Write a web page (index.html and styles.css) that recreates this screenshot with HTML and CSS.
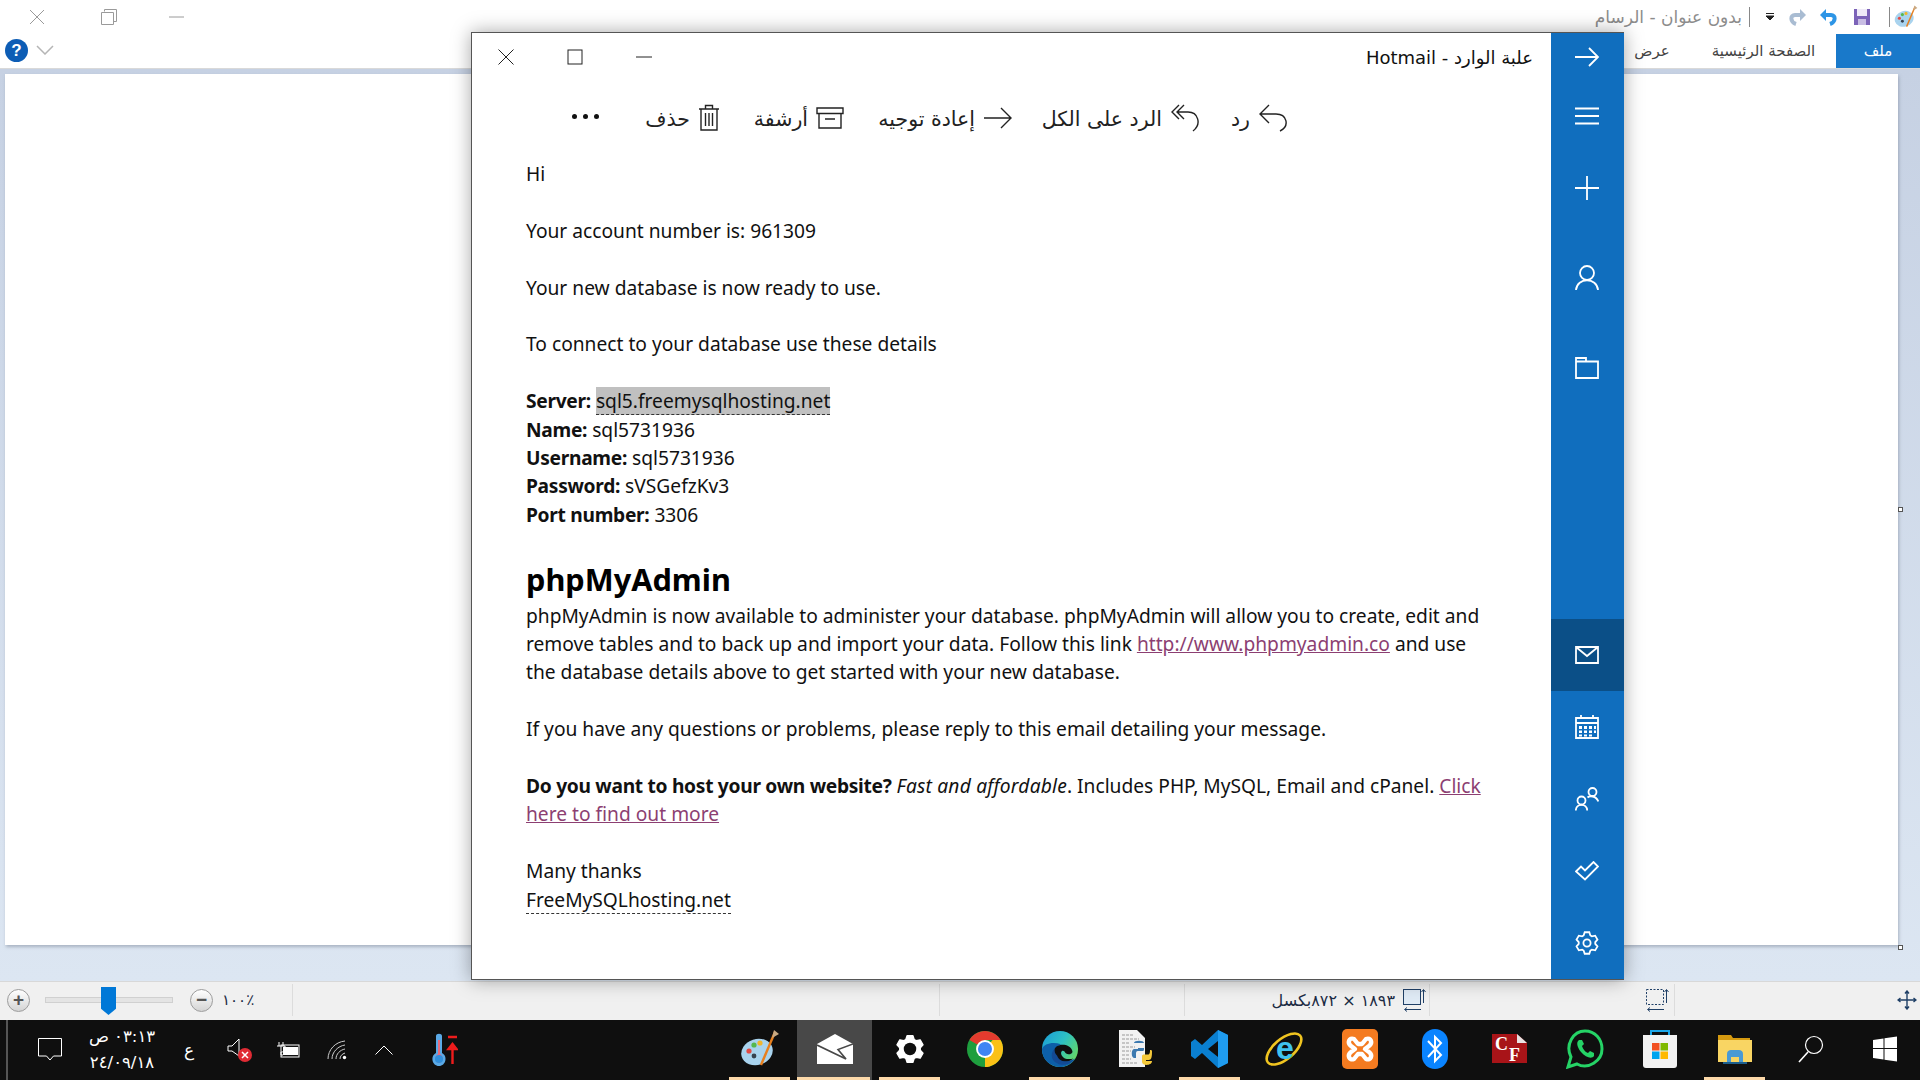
FILE: index.html
```html
<!DOCTYPE html>
<html lang="ar">
<head>
    <meta charset="UTF-8">
    <title>علبة الوارد - Hotmail</title>
    <link rel="stylesheet" href="styles.css">
</head>
<body>
    <div class="paint">
        <div class="paint-title">
            <div class="win-controls">
                <svg class="ctl" width="18" height="18" viewBox="0 0 18 18"><path d="M2 2 L16 16 M16 2 L2 16"/></svg>
                <svg class="ctl ctl-mid" width="18" height="18" viewBox="0 0 18 18"><path d="M4.5 3.5 V1.5 H16.5 V13.5 H13.5 M1.5 4.5 H13.5 V16.5 H1.5 Z"/></svg>
                <svg class="ctl" width="18" height="18" viewBox="0 0 18 18"><path d="M2 9 H17"/></svg>
            </div>
            <div class="paint-caption">
                <span class="caption-text" dir="rtl">بدون عنوان - الرسام</span>
                <span class="caption-sep sep-a"></span>
                <svg class="dropdown" width="10" height="8" viewBox="0 0 10 8"><path d="M1 0.5 H9 M1 3 H9 L5 7 Z" stroke="#222" fill="#222"/></svg>
                <svg class="qat-redo" width="20" height="20" viewBox="0 0 20 20"><path d="M14 8 H8 C3 8 3 15 9 17" fill="none" stroke="#a9bcd2" stroke-width="4"/><path d="M13 2 V14 L19 8 Z" fill="#a9bcd2"/></svg>
                <svg class="qat-undo" width="20" height="20" viewBox="0 0 20 20"><path d="M6 8 H12 C17 8 17 15 11 17" fill="none" stroke="#2d95e6" stroke-width="4"/><path d="M7 2 V14 L1 8 Z" fill="#2d95e6"/></svg>
                <svg class="qat-save" width="18" height="18" viewBox="0 0 18 18"><rect x="1" y="1" width="16" height="16" fill="#7c63b8"/><rect x="4" y="1" width="10" height="7" fill="#efeaf7"/><rect x="5" y="11" width="8" height="6" fill="#c8bde3"/></svg>
                <span class="caption-sep"></span>
                <svg class="qat-app" width="24" height="24" viewBox="0 0 40 40"><use href="#palette"/></svg>
            </div>
        </div>
        <div class="ribbon">
            <div class="ribbon-left">
                <span class="help">?</span>
                <svg class="chev" width="18" height="10" viewBox="0 0 18 10"><path d="M1 1 L9 9 L17 1"/></svg>
            </div>
            <div class="tabs" dir="rtl">
                <span class="tab tab-file">ملف</span>
                <span class="tab tab-home">الصفحة الرئيسية</span>
                <span class="tab tab-view">عرض</span>
            </div>
        </div>
        <div class="canvas">
            <div class="sheet">
                <span class="handle handle-mid"></span>
                <span class="handle handle-end"></span>
            </div>
        </div>
        <div class="status">
            <div class="stat stat-zoom">
                <span class="round-btn">+</span>
                <div class="slider"><span class="thumb"></span></div>
                <span class="round-btn">&minus;</span>
                <span class="zoom-val">١٠٠٪</span>
            </div>
            <div class="stat stat-wide"></div>
            <div class="stat stat-mid"></div>
            <div class="stat stat-mid stat-size">
                <span dir="rtl">١٨٩٣ × ٨٧٢بكسل</span>
                <svg width="24" height="24" viewBox="0 0 24 24" class="size-ico"><rect x="1.5" y="1.5" width="17" height="15" fill="#dfeaf5" stroke="#1f3f66"/><path d="M21.5 15 V2 M19.5 4 L21.5 1.5 L23.5 4 M19 21.5 H3 M5 19.5 L2.5 21.5 L5 23.5" stroke="#1f3f66" fill="none"/></svg>
            </div>
            <div class="stat stat-mid stat-select">
                <svg width="24" height="24" viewBox="0 0 24 24" class="size-ico"><rect x="1.5" y="1.5" width="17" height="15" fill="none" stroke="#1f3f66" stroke-dasharray="2 1.5"/><path d="M21.5 15 V2 M19.5 4 L21.5 1.5 L23.5 4 M19 21.5 H3 M5 19.5 L2.5 21.5 L5 23.5" stroke="#1f3f66" fill="none"/></svg>
            </div>
            <div class="stat stat-last">
                <svg width="20" height="20" viewBox="0 0 20 20" class="size-ico"><path d="M10 1 V19 M1 10 H19 M8 3.5 L10 1 L12 3.5 M8 16.5 L10 19 L12 16.5 M3.5 8 L1 10 L3.5 12 M16.5 8 L19 10 L16.5 12" stroke="#1f3f66" stroke-width="1.4" fill="none"/></svg>
            </div>
        </div>
    </div>

    <div class="mail-window">
        <div class="mail-main">
            <div class="mail-head">
                <div class="mail-controls">
                    <svg class="mctl" width="16" height="16" viewBox="0 0 16 16"><path d="M0.5 0.5 L15.5 15.5 M15.5 0.5 L0.5 15.5"/></svg>
                    <svg class="mctl" width="16" height="16" viewBox="0 0 16 16"><rect x="1" y="1" width="14" height="14"/></svg>
                    <svg class="mctl" width="16" height="16" viewBox="0 0 16 16"><path d="M0 8 H16"/></svg>
                </div>
                <span class="mail-title" dir="rtl">علبة الوارد - Hotmail</span>
            </div>
            <div class="toolbar">
                <div class="dots"><i></i><i></i><i></i></div>
                <div class="action act-delete">
                    <span dir="rtl">حذف</span>
                    <svg class="tico" width="22" height="28" viewBox="0 0 22 28"><path d="M1 5 H21 M3 5 V26 H19 V5 M7.5 5 V1.5 H14.5 V5 M7.5 9 V22 M11 9 V22 M14.5 9 V22"/></svg>
                </div>
                <div class="action act-archive">
                    <span dir="rtl">أرشفة</span>
                    <svg class="tico" width="28" height="24" viewBox="0 0 28 24"><path d="M1 2 H27 V7.5 H1 Z M3 7.5 V22 H25 V7.5 M9 13 H19"/></svg>
                </div>
                <div class="action act-forward">
                    <span dir="rtl">إعادة توجيه</span>
                    <svg class="tico" width="30" height="24" viewBox="0 0 30 24"><path d="M1 12 H28 M18 2 L28 12 L18 22"/></svg>
                </div>
                <div class="action act-all">
                    <span dir="rtl">الرد على الكل</span>
                    <svg class="tico" width="30" height="28" viewBox="0 0 30 28"><path d="M9 1 L2 8 L9 15 M14 1 L7 8 L14 15 M7 8 H18 C28 8 32 20 23 27"/></svg>
                </div>
                <div class="action act-reply">
                    <span dir="rtl">رد</span>
                    <svg class="tico" width="30" height="28" viewBox="0 0 30 28"><path d="M11 1 L2 10 L11 19 M2 10 H18 C29 10 32 22 22 27"/></svg>
                </div>
            </div>
            <div class="mail-body">
                <p>Hi</p>
                <p>Your account number is: 961309</p>
                <p>Your new database is now ready to use.</p>
                <p>To connect to your database use these details</p>
                <p>
                    <b>Server:</b> <span class="detected">sql5.freemysqlhosting.net</span><br>
                    <b>Name:</b> sql5731936<br>
                    <b>Username:</b> sql5731936<br>
                    <b>Password:</b> sVSGefzKv3<br>
                    <b>Port number:</b> 3306
                </p>
                <h2>phpMyAdmin</h2>
                <p>phpMyAdmin is now available to administer your database. phpMyAdmin will allow you to create, edit and<br>
                remove tables and to back up and import your data. Follow this link <a href="#">http://www.phpmyadmin.co</a> and use<br>
                the database details above to get started with your new database.</p>
                <p>If you have any questions or problems, please reply to this email detailing your message.</p>
                <p><b>Do you want to host your own website?</b> <i>Fast and affordable</i>. Includes PHP, MySQL, Email and cPanel. <a href="#">Click<br>here to find out more</a></p>
                <p>Many thanks<br><span class="dashed">FreeMySQLhosting.net</span></p>
            </div>
        </div>
        <div class="rail">
            <div class="rail-item rail-first"><svg width="26" height="24" viewBox="0 0 26 24"><path d="M1 12 H24 M15 3 L24 12 L15 21"/></svg></div>
            <div class="rail-item"><svg width="24" height="18" viewBox="0 0 24 18"><path d="M0 1.5 H24 M0 9 H24 M0 16.5 H24"/></svg></div>
            <div class="rail-item"><svg width="24" height="24" viewBox="0 0 24 24"><path d="M0 12 H24 M12 0 V24"/></svg></div>
            <div class="rail-item rail-gap"><svg width="24" height="26" viewBox="0 0 24 26"><circle cx="12" cy="8" r="7"/><path d="M1 25 C2 12 22 12 23 25"/></svg></div>
            <div class="rail-item rail-gap"><svg width="24" height="22" viewBox="0 0 24 22"><path d="M1 4.5 H23 V21 H1 Z M1 4.5 V1 H11 V4.5"/></svg></div>
            <div class="rail-bottom">
                <div class="rail-item rail-on"><svg width="24" height="18" viewBox="0 0 24 18"><path d="M1 1 H23 V17 H1 Z M1 1 L12 10 L23 1"/></svg></div>
                <div class="rail-item"><svg width="24" height="24" viewBox="0 0 24 24"><path d="M1 3 H23 V23 H1 Z M1 8 H23 M6 0 V4 M18 0 V4"/><path class="fill" d="M4 11 H7 V14 H4 Z M9 11 H12 V14 H9 Z M14 11 H17 V14 H14 Z M19 11 H21 V14 H19 Z M4 15.5 H7 V18 H4 Z M9 15.5 H12 V18 H9 Z M14 15.5 H17 V18 H14 Z M19 15.5 H21 V18 H19 Z M4 19.5 H7 V21.5 H4 Z M9 19.5 H12 V21.5 H9 Z M14 19.5 H17 V21.5 H14 Z"/></svg></div>
                <div class="rail-item"><svg width="24" height="24" viewBox="0 0 24 24"><circle cx="6.5" cy="13.5" r="4"/><path d="M0.8 23.5 C1 16 12 16 12.2 23.5"/><circle cx="17.5" cy="5" r="4"/><path d="M12.5 10.5 C14 9 21 8 23.3 14.5"/></svg></div>
                <div class="rail-item"><svg width="24" height="20" viewBox="0 0 24 20"><path d="M1 10.5 L6 5.5 L10 9.5 L18.5 1 L23 5.5 L10 18.5 Z"/></svg></div>
                <div class="rail-item"><svg width="24" height="24" viewBox="0 0 24 24"><polygon points="9.71,1.24 14.29,1.24 15.38,4.42 16.88,5.28 20.17,4.64 22.46,8.6 20.26,11.13 20.26,12.87 22.46,15.4 20.17,19.36 16.88,18.72 15.38,19.58 14.29,22.76 9.71,22.76 8.62,19.58 7.12,18.72 3.83,19.36 1.54,15.4 3.74,12.87 3.74,11.13 1.54,8.6 3.83,4.64 7.12,5.28 8.62,4.42"/><circle cx="12" cy="12" r="3.6"/></svg></div>
            </div>
        </div>
    </div>

    <div class="taskbar">
        <div class="tray">
            <span class="tray-line"></span>
            <svg width="24" height="24" viewBox="0 0 24 24"><path d="M0.5 0.5 H23.5 V18 H15.5 L12 22 L8.5 18 H0.5 Z" fill="none" stroke="#fff"/></svg>
            <div class="clock" dir="rtl"><span>٠٣:١٣ ص</span><span>٢٤/٠٩/١٨</span></div>
            <span class="lang">ع</span>
            <svg width="26" height="24" viewBox="0 0 26 24"><path d="M1 8 H5 L12 1 V18 L5 13 H1 Z" fill="none" stroke="#fff"/><circle cx="18" cy="17" r="7" fill="#e02b34"/><path d="M15 14 L21 20 M21 14 L15 20" stroke="#fff" stroke-width="1.5"/></svg>
            <svg width="24" height="18" viewBox="0 0 24 18"><path d="M3 1 V5 M7 1 V5 M1 5 H9 V8 C9 11 6 11 5 11 V14 H7" fill="none" stroke="#fff"/><rect x="5" y="4" width="18" height="12" fill="none" stroke="#fff"/><rect x="7" y="6" width="15" height="8" fill="#fff"/></svg>
            <svg width="20" height="20" viewBox="0 0 20 20"><g fill="none" stroke="#ccc"><path d="M1 19 C1 10 8 2 18 1"/><path d="M5 19 C5 12 11 6 18 5"/><path d="M9 19 C9 14 13 10 18 9"/><path d="M13 19 C13 16 15 14 18 13"/></g><circle cx="17.5" cy="17.5" r="1.7" fill="#fff"/></svg>
            <svg width="18" height="10" viewBox="0 0 18 10"><path d="M0.5 9.5 L9 1 L17.5 9.5" fill="none" stroke="#fff"/></svg>
            <svg width="28" height="34" viewBox="0 0 28 34"><path d="M6 3 C6 0 12 0 12 3 V20 C18 23 16 33 9 33 C2 33 0 23 6 20 Z" fill="#5aa9e6"/><path d="M8 7 H10 V21 C14 23 13 30 9 30 C5 30 4 23 8 21 Z" fill="#e86a7a"/><circle cx="9" cy="26" r="4" fill="#2f8fdc"/><path d="M18 4 H27 M22.5 31 V12 M18.5 16 L22.5 11 L26.5 16 Z" stroke="#ee1c1c" stroke-width="2.4" fill="#ee1c1c"/></svg>
        </div>
        <div class="task run">
            <svg width="40" height="40" viewBox="0 0 40 40"><symbol id="palette" viewBox="0 0 40 40"><ellipse cx="17" cy="23" rx="16" ry="13" fill="#a9d3ee" transform="rotate(-18 17 23)"/><circle cx="9" cy="22" r="2.6" fill="#e34a43"/><circle cx="14" cy="16" r="2.6" fill="#55b84e"/><circle cx="20" cy="14" r="2.6" fill="#f0b52e"/><circle cx="14" cy="27" r="2.4" fill="#38424f"/><path d="M35 3 L21 36" stroke="#e77f1e" stroke-width="2.4"/><path d="M32 9 L34 1 L39 5 Z" fill="#c9a982"/></symbol><use href="#palette"/></svg>
        </div>
        <div class="task run active">
            <svg width="36" height="30" viewBox="0 0 36 30"><path d="M0 10 L18 0 L36 10 V30 H0 Z" fill="#fff"/><path d="M0 11 L29 25 L21 15.5 L36 10" fill="none" stroke="#484848" stroke-width="1.6"/></svg>
        </div>
        <div class="task run">
            <svg width="30" height="30" viewBox="0 0 24 24"><polygon points="9.71,1.24 14.29,1.24 15.38,4.42 16.88,5.28 20.17,4.64 22.46,8.6 20.26,11.13 20.26,12.87 22.46,15.4 20.17,19.36 16.88,18.72 15.38,19.58 14.29,22.76 9.71,22.76 8.62,19.58 7.12,18.72 3.83,19.36 1.54,15.4 3.74,12.87 3.74,11.13 1.54,8.6 3.83,4.64 7.12,5.28 8.62,4.42" fill="#fff" stroke="#fff" stroke-linejoin="round"/><circle cx="12" cy="12" r="5" fill="#0f0f0f"/></svg>
        </div>
        <div class="task">
            <svg width="38" height="38" viewBox="0 0 40 40"><circle cx="20" cy="20" r="19" fill="#1e9e3e"/><path d="M3.6 10.5 A19 19 0 0 1 36.4 10.5 L20 10.5 L11.8 15.3 Z" fill="#e33b2e"/><path d="M36.4 10.5 A19 19 0 0 1 20 39 L20 20 L28 10.5 Z" fill="#fbc116"/><circle cx="20" cy="20" r="9.4" fill="#fff"/><circle cx="20" cy="20" r="7.4" fill="#3f85f4"/></svg>
        </div>
        <div class="task run">
            <svg width="38" height="38" viewBox="0 0 40 40"><defs><linearGradient id="edgeTop" x1="0" y1="0" x2="1" y2="0.6"><stop offset="0" stop-color="#1a9ad8"/><stop offset="0.55" stop-color="#2dc1c4"/><stop offset="1" stop-color="#62d66a"/></linearGradient></defs><circle cx="20" cy="20" r="19" fill="url(#edgeTop)"/><path d="M1 20 C1 32 11 39 20 39 C26 39 32 36 36 30 C30 33 21 34 17 28 C14 23 16 17 21 15 C13 12 3 14 1 20 Z" fill="#0d5fa8"/><path d="M14 22 C14 14 30 13 33 22 C34 26 26 27 25 23 C22 20 20 24 22 27 C24 31 30 31 34 30 C28 36 14 34 14 22 Z" fill="#0f0f0f"/><path d="M17 27 C19 33 27 35 35 31 C30 37 22 38 17 35 C10 32 10 24 14 20 C14 23 15 25 17 27 Z" fill="#134a94"/></svg>
        </div>
        <div class="task">
            <svg width="36" height="40" viewBox="0 0 36 40"><path d="M2 1 H20 L28 9 V38 H2 Z" fill="#f2f2f2"/><path d="M5 6 H17 M5 10 H22 M5 14 H12 M5 18 H18 M5 22 H14 M5 26 H12 M5 30 H14 M5 34 H20" stroke="#9a9a9a" stroke-width="1.2" stroke-dasharray="3 1"/><path d="M17 14 C17 11 27 11 27 14 V19 H21 V20.5 H27 V20 H17 C14 20 14 29 17 29 H19 V24 C19 22 21 22 21 22 H26 C27 22 27 20 27 20 V14 Z" fill="#3d7ab0"/><path d="M35 23 C35 32 33 31 29 31 V32 H35 C35 37 25 37 25 33 V27 C25 26 26 25.5 27 25.5 H31 C33 25.5 33 23 33 21 H34 C35 21 35 22 35 23 Z" fill="#f5c93a"/></svg>
        </div>
        <div class="task run">
            <svg width="38" height="40" viewBox="0 0 38 40"><path d="M27 1 L37 6 V34 L27 39 L11 24 L4 30 L0 27 V13 L4 10 L11 16 Z M27 12 L17 20 L27 28 Z" fill="#0a7fd0" fill-rule="evenodd"/><path d="M27 1 L37 6 V34 L27 39 Z M27 12 V28 Z" fill="#1f9cf0"/></svg>
        </div>
        <div class="task">
            <svg width="40" height="40" viewBox="0 0 40 40"><ellipse cx="19" cy="20" rx="21" ry="10" transform="rotate(-40 19 20)" fill="none" stroke="#f0c420" stroke-width="2.6"/><text x="20" y="30" class="ie-e">e</text></svg>
        </div>
        <div class="task">
            <svg width="36" height="40" viewBox="0 0 36 40"><rect width="36" height="40" rx="5" fill="#f47b20"/><path d="M12 10 C7 8 5 14 9 17 L13 20 L9 23 C5 26 7 32 12 30 L16 25 H20 L24 30 C29 32 31 26 27 23 L23 20 L27 17 C31 14 29 8 24 10 L20 15 H16 Z" fill="none" stroke="#fff" stroke-width="4.4" stroke-linejoin="round"/></svg>
        </div>
        <div class="task">
            <svg width="26" height="40" viewBox="0 0 26 40"><rect width="26" height="40" rx="13" fill="#0a84ff"/><path d="M6 12 L19 26 L13 32 V8 L19 14 L6 28" fill="none" stroke="#fff" stroke-width="2"/></svg>
        </div>
        <div class="task">
            <svg width="36" height="32" viewBox="0 0 36 32"><path d="M0 1 H25 L35 10 V30 H0 Z" fill="#a81418"/><path d="M25 1 L35 10 H25 Z" fill="#e8e2e2"/><text x="3" y="17" class="cf">C</text><text x="17" y="28" class="cf">F</text></svg>
        </div>
        <div class="task">
            <svg width="38" height="40" viewBox="0 0 38 40"><path d="M2 38 L5 28 C-1 16 7 2 19 2 C29 2 36 10 36 20 C36 32 22 41 11 35 Z" fill="none" stroke="#25d366" stroke-width="3"/><path d="M13 11 C10 13 11 18 15 23 C20 29 26 30 28 27 L28 24 L24 22 L22 24 C19 23 17 20 16 17 L18 15 L16 11 Z" fill="#25d366"/></svg>
        </div>
        <div class="task">
            <svg width="36" height="40" viewBox="0 0 36 40"><path d="M9 6 V2 H27 V6" fill="none" stroke="#1ba6e8" stroke-width="2"/><path d="M1 6 H35 V36 C35 38 34 39 32 39 H4 C2 39 1 38 1 36 Z" fill="#f2f2f2"/><rect x="10" y="14" width="7.5" height="7.5" fill="#f25022"/><rect x="18.5" y="14" width="7.5" height="7.5" fill="#7fba00"/><rect x="10" y="22.5" width="7.5" height="7.5" fill="#00a4ef"/><rect x="18.5" y="22.5" width="7.5" height="7.5" fill="#ffb900"/></svg>
        </div>
        <div class="task run">
            <svg width="34" height="32" viewBox="0 0 34 32"><path d="M0 2 H13 L15 5 H32 V12 H0 Z" fill="#d59a10"/><path d="M0 7 H34 V29 H0 Z" fill="#f9d563"/><path d="M9 30 V21 C9 18 11 17 13 17 H21 C23 17 25 18 25 21 V30 H21 V24 H13 V30 Z" fill="#4a9ad4"/><path d="M5 29 H29 V31 H5 Z" fill="#1d5f8c"/></svg>
        </div>
        <div class="task task-search">
            <svg width="26" height="28" viewBox="0 0 26 28"><circle cx="16" cy="10" r="8.5" fill="none" stroke="#fff" stroke-width="1.2"/><path d="M10 17 L1 27" stroke="#fff" stroke-width="1.6"/></svg>
        </div>
        <div class="task">
            <svg width="24" height="26" viewBox="0 0 24 26"><path d="M0 4 L10.5 2.5 V12 H0 Z M11.5 2.3 L24 0.5 V12 H11.5 Z M0 13 H10.5 V23.5 L0 22 Z M11.5 13 H24 V25.5 L11.5 23.7 Z" fill="#fff"/></svg>
        </div>
    </div>
</body>
</html>
```

FILE: styles.css
```css
* {
    box-sizing: border-box;
}
html, body {
    margin: 0;
    height: 100%;
}
body {
    position: relative;
    width: 1920px;
    height: 1080px;
    overflow: hidden;
    font-family: "DejaVu Sans", sans-serif;
    background: #fff;
}
.paint {
    display: flex;
    flex-direction: column;
    height: 1020px;
}

/* paint title bar */
.paint-title {
    display: flex;
    justify-content: space-between;
    align-items: center;
    height: 34px;
    background: #fff;
}
.win-controls {
    display: flex;
    gap: 51px;
    padding-left: 28px;
}
.ctl path {
    fill: none;
    stroke: #9a9a9a;
    stroke-width: 1;
}
.ctl-mid {
    margin: 0 -2px 0 3px;
}
.paint-caption {
    display: flex;
    align-items: center;
    padding-right: 2px;
}
.caption-text {
    margin-right: 7px;
    color: #8c8c8c;
    font-size: 17px;
}
.caption-sep {
    width: 1px;
    height: 20px;
    background: #888;
}
.sep-a {
    margin-right: 15px;
}
.dropdown {
    margin-right: 12px;
}
.qat-redo {
    margin-right: 12px;
}
.qat-undo {
    margin-right: 14px;
}
.qat-save {
    margin-right: 18px;
}
.qat-app {
    margin-left: 4px;
}

/* ribbon */
.ribbon {
    display: flex;
    justify-content: space-between;
    height: 35px;
    border-bottom: 1px solid #d9d9d9;
    background: #fff;
}
.ribbon-left {
    display: flex;
    align-items: center;
    gap: 8px;
    padding: 0 0 2px 5px;
}
.help {
    width: 23px;
    height: 23px;
    border-radius: 50%;
    background: #0d5db5;
    color: #fff;
    font: bold 17px/23px "Liberation Sans", sans-serif;
    text-align: center;
}
.chev path {
    fill: none;
    stroke: #b5b5b5;
    stroke-width: 1.5;
}
.tabs {
    display: flex;
    font-size: 15px;
    color: #444;
}
.tab {
    display: flex;
    align-items: center;
    justify-content: center;
    height: 34px;
}
.tab-file {
    width: 84px;
    background: #1979ca;
    color: #fff;
}
.tab-home {
    width: 145px;
}
.tab-view {
    width: 78px;
}

/* canvas */
.canvas {
    flex: 1;
    padding: 5px 22px 0 5px;
    background: linear-gradient(#c6d1e3, #dce6f2);
}
.sheet {
    position: relative;
    height: 871px;
    background: #fff;
    box-shadow: 1px 2px 3px rgba(120, 130, 150, 0.5);
}
.handle {
    position: absolute;
    width: 5px;
    height: 5px;
    background: #fff;
    border: 1px solid #555;
}
.handle-mid {
    right: -5px;
    top: 433px;
}
.handle-end {
    right: -5px;
    bottom: -5px;
}

/* status bar */
.status {
    display: flex;
    height: 39px;
    background: #f0f0f0;
    border-top: 1px solid #d8d8d8;
    color: #1c2c44;
    font-size: 16px;
}
.stat {
    display: flex;
    align-items: center;
    border-right: 1px solid #dcdcdc;
    margin: 2px 0 4px;
}
.stat-zoom {
    width: 293px;
    padding-left: 7px;
}
.stat-wide {
    width: 647px;
}
.stat-mid {
    width: 245px;
}
.stat-size, .stat-select {
    justify-content: flex-end;
    gap: 7px;
    padding-right: 3px;
}
.stat-select {
    padding-right: 5px;
}
.stat-last {
    flex: 1;
    justify-content: flex-end;
    padding-right: 3px;
    border-right: 0;
}
.round-btn {
    width: 23px;
    height: 23px;
    border: 1px solid #9c9c9c;
    border-radius: 50%;
    background: linear-gradient(#fff, #d4d4d4);
    color: #555;
    font: bold 19px/20px "Liberation Sans", sans-serif;
    text-align: center;
}
.slider {
    position: relative;
    width: 128px;
    height: 6px;
    margin: 0 17px 0 15px;
    background: #e4e4e4;
    border: 1px solid #d0d0d0;
}
.thumb {
    position: absolute;
    left: 55px;
    top: -11px;
    width: 15px;
    height: 28px;
    background: #0078d7;
    clip-path: polygon(0 0, 100% 0, 100% 78%, 50% 100%, 0 78%);
}
.zoom-val {
    margin-left: 9px;
    font-size: 15px;
}

/* mail window, sits on top of paint */
.mail-window {
    position: absolute;
    left: 471px;
    top: 32px;
    display: flex;
    width: 1153px;
    height: 948px;
    background: #fff;
    border-top: 1px solid #555;
    border-left: 1px solid #555;
    border-bottom: 1px solid #555;
    box-shadow: 0 0 18px rgba(0, 0, 0, 0.35);
}
.mail-main {
    flex: 1;
    min-width: 0;
}
.mail-head {
    display: flex;
    justify-content: space-between;
    align-items: center;
    height: 48px;
    padding: 0 18px 0 26px;
}
.mail-controls {
    display: flex;
    gap: 53px;
}
.mctl path, .mctl rect {
    fill: none;
    stroke: #222;
    stroke-width: 1;
}
.mail-title {
    font-size: 18px;
    color: #111;
}
.toolbar {
    display: flex;
    align-items: center;
    height: 74px;
    padding-left: 100px;
    font-size: 20.5px;
    color: #222;
}
.dots {
    display: flex;
    gap: 6px;
    width: 48px;
    padding-bottom: 4px;
}
.dots i {
    width: 5px;
    height: 5px;
    border-radius: 50%;
    background: #111;
}
.action {
    display: flex;
    align-items: center;
    justify-content: flex-end;
    gap: 8px;
}
.action span {
    padding-top: 2px;
}
.act-delete {
    width: 100px;
}
.act-archive {
    width: 124px;
}
.act-forward {
    width: 169px;
}
.act-all {
    width: 187px;
}
.act-reply {
    width: 88px;
}
.tico path {
    fill: none;
    stroke: #222;
    stroke-width: 1.4;
}
.mail-body {
    padding: 5px 0 0 54px;
    font-family: "Noto Sans", sans-serif;
    font-size: 19.2px;
    line-height: 28.4px;
    color: #111;
}
.mail-body p {
    margin: 0 0 28.4px;
}
.mail-body b {
    letter-spacing: -0.3px;
}
.mail-body i {
    letter-spacing: 0.2px;
}
.mail-body h2 {
    margin: 0 0 2px;
    font-size: 30.7px;
    line-height: 42px;
    color: #000;
}
.mail-body a {
    color: #8c3f72;
}
.detected {
    background: #c0c0c0;
    border-bottom: 1px dashed #333;
}
.dashed {
    border-bottom: 1px dashed #333;
}

/* right rail */
.rail {
    display: flex;
    flex-direction: column;
    width: 73px;
    background: #106ebe;
}
.rail svg {
    fill: none;
    stroke: #fff;
    stroke-width: 1.8;
}
.rail svg .fill {
    fill: #fff;
    stroke: none;
}
.rail-item {
    display: flex;
    align-items: center;
    justify-content: center;
    height: 72px;
    padding-right: 2px;
}
.rail-first {
    height: 47px;
}
.rail-gap {
    margin-top: 18px;
}
.rail-bottom {
    margin-top: auto;
}
.rail-on {
    background: #0b4f87;
}

/* taskbar */
.taskbar {
    display: flex;
    height: 60px;
    background: #0f0f0f;
    color: #fff;
    overflow: hidden;
}
.tray {
    flex: none;
    display: grid;
    grid-template-columns: 48px 96px 38px 64px 32px 66px 28px 92px;
    align-items: center;
    justify-items: center;
    width: 722px;
    padding-left: 26px;
    position: relative;
}
.tray-line {
    position: absolute;
    left: 6px;
    top: 0;
    bottom: 0;
    width: 2px;
    background: #555;
}
.clock {
    display: flex;
    flex-direction: column;
    align-items: center;
    gap: 6px;
    font-size: 16.5px;
    line-height: 20px;
}
.lang {
    font-size: 17px;
}
.task {
    position: relative;
    flex: none;
    display: flex;
    align-items: center;
    justify-content: center;
    width: 75px;
    height: 60px;
    padding-bottom: 2px;
}
.task-search {
    padding-left: 3px;
}
.task.run::after {
    content: "";
    position: absolute;
    left: 7px;
    right: 7px;
    bottom: 0;
    height: 3px;
    background: #fcd9a9;
}
.task.active {
    background: #484848;
}
.task.active::after {
    left: 0;
    right: 2px;
}
.ie-e {
    font: bold 32px "Liberation Sans", sans-serif;
    fill: #3fc3ee;
    text-anchor: middle;
}
.cf {
    font: bold 18px "Liberation Serif", serif;
    fill: #fff;
}
```
